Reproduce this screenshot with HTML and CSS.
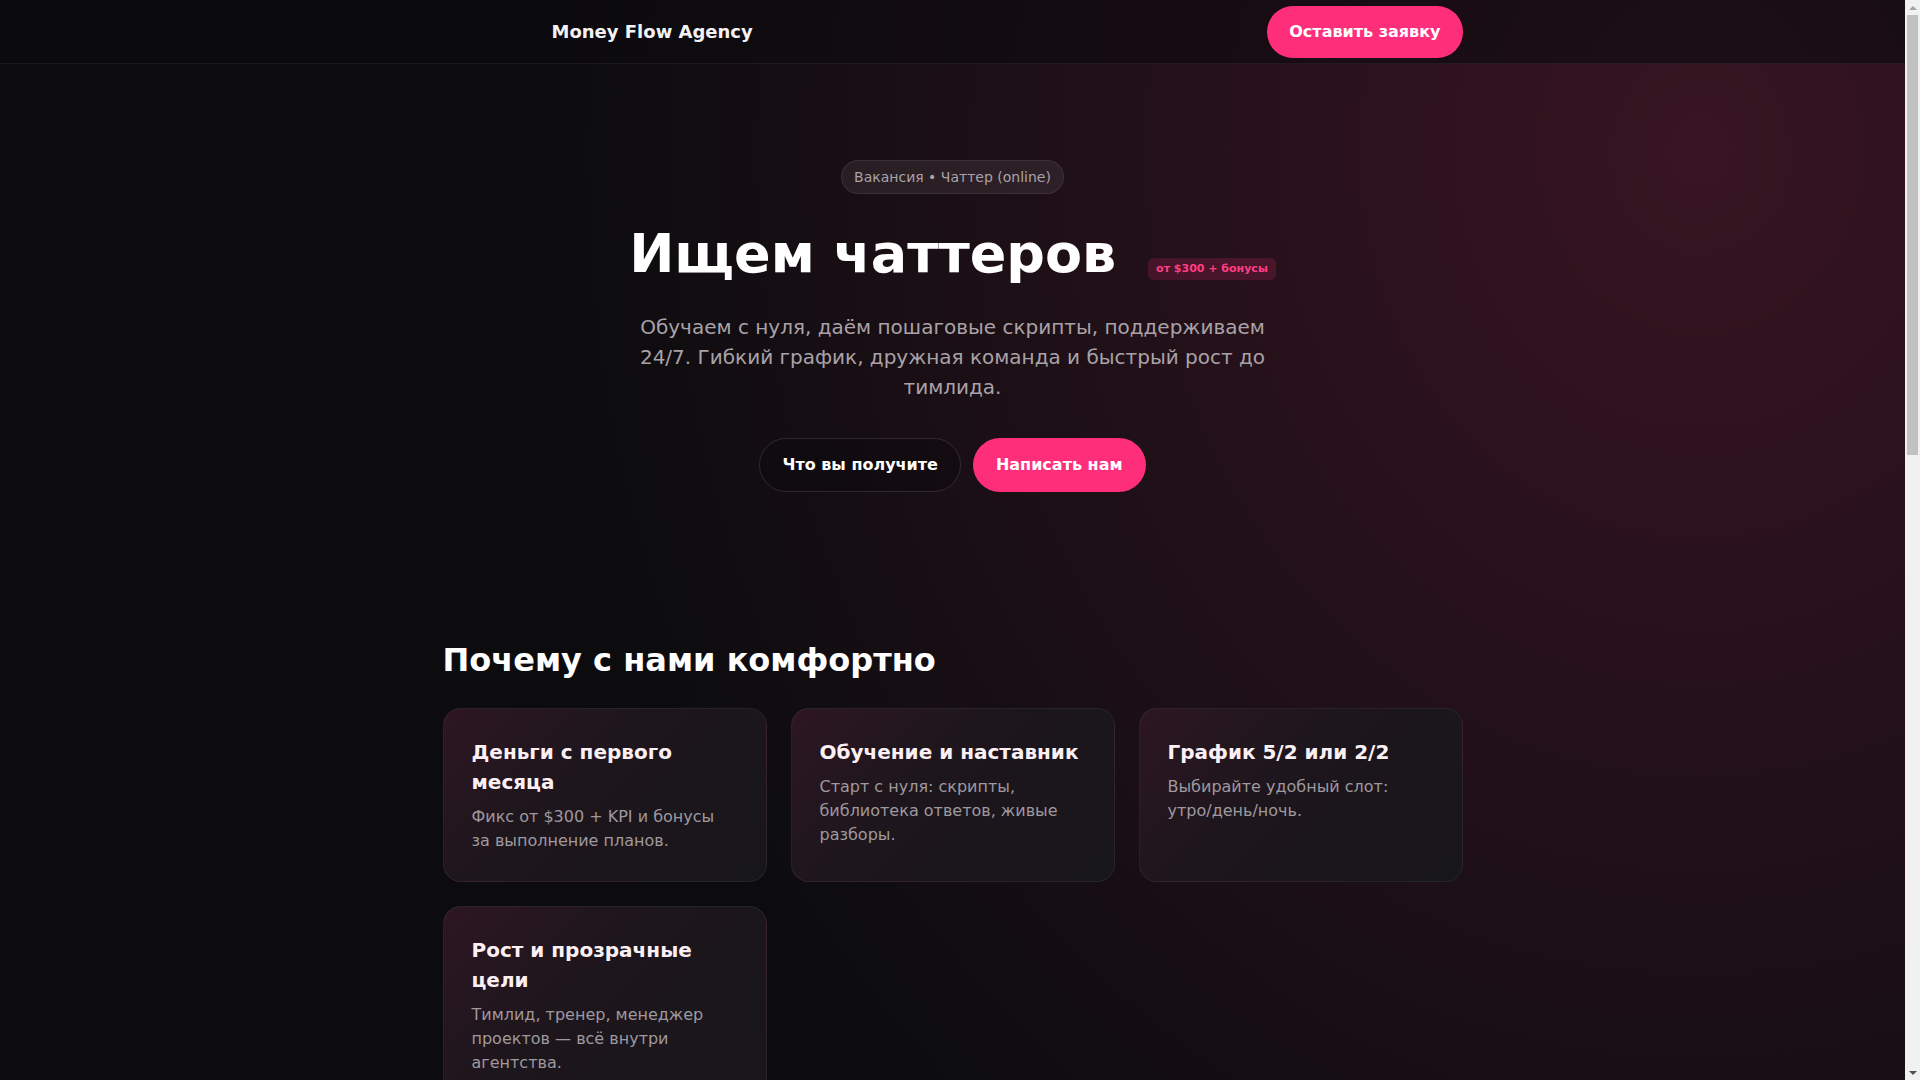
FILE: index.html
```html
<!DOCTYPE html>
<html lang="ru">
<head>
<meta charset="utf-8">
<title>Money Flow Agency — Вакансия чаттер</title>
<link rel="stylesheet" href="styles.css">
</head>
<body>
<div class="page">
<header class="site-header">
  <div class="container header-inner">
    <div class="brand">
      <span class="brand-mark" aria-hidden="true"></span>
      <span class="brand-name">Money Flow Agency</span>
    </div>
    <a class="btn btn-primary btn-header" href="#apply">Оставить заявку</a>
  </div>
</header>

<main>
  <section class="hero container">
    <span class="pill">Вакансия • Чаттер (online)</span>
    <h1 class="hero-title">Ищем чаттеров <span class="salary">от $300 + бонусы</span></h1>
    <p class="hero-sub">Обучаем с нуля, даём пошаговые скрипты, поддерживаем 24/7. Гибкий график, дружная команда и быстрый рост до тимлида.</p>
    <div class="hero-actions">
      <a class="btn btn-ghost" href="#benefits">Что вы получите</a>
      <a class="btn btn-primary" href="#apply">Написать нам</a>
    </div>
  </section>

  <section class="section container" id="benefits">
    <h2 class="section-title">Почему с нами комфортно</h2>
    <div class="cards">
      <article class="card">
        <h3 class="card-title">Деньги с первого месяца</h3>
        <p class="card-text">Фикс от $300 + KPI и бонусы за выполнение планов.</p>
      </article>
      <article class="card">
        <h3 class="card-title">Обучение и наставник</h3>
        <p class="card-text">Старт с нуля: скрипты, библиотека ответов, живые разборы.</p>
      </article>
      <article class="card">
        <h3 class="card-title">График 5/2 или 2/2</h3>
        <p class="card-text">Выбирайте удобный слот: утро/день/ночь.</p>
      </article>
      <article class="card">
        <h3 class="card-title">Рост и прозрачные цели</h3>
        <p class="card-text">Тимлид, тренер, менеджер проектов — всё внутри агентства.</p>
      </article>
    </div>
  </section>

  <section class="section container">
    <h2 class="section-title">Что нужно от вас</h2>
    <div class="cards">
      <article class="card">
        <h3 class="card-title">Грамотная речь</h3>
        <p class="card-text">Уверенный английский на уровне переписки и внимание к деталям.</p>
      </article>
      <article class="card">
        <h3 class="card-title">Компьютер и интернет</h3>
        <p class="card-text">Стабильное соединение и 6–8 часов в выбранную смену.</p>
      </article>
      <article class="card">
        <h3 class="card-title">Желание зарабатывать</h3>
        <p class="card-text">Готовность учиться, пробовать новое и расти вместе с командой.</p>
      </article>
    </div>
  </section>

  <section class="section container">
    <h2 class="section-title">Как начать</h2>
    <div class="cards">
      <article class="card">
        <h3 class="card-title">1. Заявка</h3>
        <p class="card-text">Оставьте контакты — мы ответим в течение дня.</p>
      </article>
      <article class="card">
        <h3 class="card-title">2. Собеседование</h3>
        <p class="card-text">Короткий созвон: расскажем о работе и ответим на вопросы.</p>
      </article>
      <article class="card">
        <h3 class="card-title">3. Обучение</h3>
        <p class="card-text">Неделя практики с наставником и выход на первую смену.</p>
      </article>
    </div>
  </section>

  <section class="section container" id="apply">
    <div class="cta card">
      <h2 class="section-title">Готовы попробовать?</h2>
      <p class="card-text">Напишите нам — расскажем подробности и подберём удобный график.</p>
      <a class="btn btn-primary" href="#apply">Написать нам</a>
    </div>
  </section>
</main>

<footer class="site-footer">
  <div class="container footer-inner">
    <span>© Money Flow Agency</span>
    <span>Работа онлайн • Обучение с нуля</span>
  </div>
</footer>
</div>
<div class="scrollbar" aria-hidden="true">
  <span class="sb-btn sb-up"></span>
  <span class="sb-thumb"></span>
  <span class="sb-fill"></span>
  <span class="sb-btn sb-down"></span>
</div>
</body>
</html>
```

FILE: styles.css
```css
* {
  box-sizing: border-box;
}

html,
body {
  margin: 0;
  padding: 0;
  height: 100%;
}

body {
  display: flex;
  overflow: hidden;
  font-family: "DejaVu Sans", "Noto Sans", sans-serif;
  color: #ffffff;
  background-color: #0c0c0f;
  background-image: radial-gradient(1150px 1300px at 1700px 150px, rgba(255, 60, 120, 0.18), rgba(255, 60, 120, 0) 100%);
  background-repeat: no-repeat;
  -webkit-font-smoothing: antialiased;
}

.page {
  flex: 1 1 auto;
  min-width: 0;
  height: 100vh;
  overflow-y: auto;
  scrollbar-width: none;
}

/* Classic light scrollbar, as in the reference */
.scrollbar {
  flex: 0 0 15px;
  width: 15px;
  height: 100vh;
  display: flex;
  flex-direction: column;
  background: #f1f1f1;
}

.sb-btn {
  flex: 0 0 15px;
  display: flex;
  align-items: center;
  justify-content: center;
  background: #f1f1f1;
}

.sb-btn::before {
  content: "";
  width: 0;
  height: 0;
  border-left: 4px solid transparent;
  border-right: 4px solid transparent;
}

.sb-up::before {
  border-bottom: 4px solid #a3a3a3;
}

.sb-down::before {
  border-top: 4px solid #505050;
}

.sb-thumb {
  flex: 0 0 440px;
  margin: 0 2px;
  background: #c1c1c1;
}

.sb-fill {
  flex: 1 1 auto;
}

a {
  text-decoration: none;
  color: inherit;
}

.container {
  width: 1020px;
  margin-left: auto;
  margin-right: auto;
}

/* Header */
.site-header {
  height: 64px;
  background: rgba(12, 10, 14, 0.6);
  border-bottom: 1px solid rgba(255, 255, 255, 0.06);
}

.header-inner {
  height: 63px;
  display: flex;
  align-items: center;
  justify-content: space-between;
}

.brand {
  display: flex;
  align-items: center;
  gap: 12px;
}

.brand-mark {
  width: 97px;
  height: 40px;
}

.brand-name {
  font-size: 18px;
  font-weight: 700;
  line-height: 28px;
  color: #f4f2f4;
}

/* Buttons */
.btn {
  display: inline-flex;
  align-items: center;
  justify-content: center;
  font-size: 16px;
  font-weight: 700;
  line-height: 24px;
  padding: 14px 22px;
  border-radius: 999px;
  border: 1px solid transparent;
  white-space: nowrap;
}

.btn-primary {
  background: #ff2e7a;
  color: #ffffff;
}

.btn-header {
  padding: 13px 21px;
}

.btn-ghost {
  background: rgba(8, 8, 10, 0.3);
  border-color: rgba(255, 255, 255, 0.12);
  color: #ffffff;
}

/* Hero */
.hero {
  display: flex;
  flex-direction: column;
  align-items: center;
  text-align: center;
  padding-top: 96px;
}

.pill {
  display: inline-block;
  font-size: 14px;
  line-height: 20px;
  padding: 6px 12px;
  border-radius: 999px;
  color: #aaa2a8;
  background: rgba(255, 255, 255, 0.07);
  border: 1px solid rgba(255, 255, 255, 0.08);
}

.hero-title {
  margin: 30px 0 0;
  font-size: 54px;
  line-height: 1.1;
  font-weight: 700;
  color: #ffffff;
}

.salary {
  display: inline-block;
  margin-left: 13px;
  font-size: 11px;
  line-height: 18px;
  font-weight: 700;
  padding: 2px 8px;
  border-radius: 6px;
  color: #ff3d86;
  background: rgba(255, 46, 122, 0.16);
}

.hero-sub {
  margin: 29px 0 0;
  max-width: 660px;
  font-size: 20px;
  line-height: 30px;
  color: #a9a2a8;
}

.hero-actions {
  display: flex;
  gap: 12px;
  margin-top: 36px;
}

/* Sections */
.section {
  padding-top: 148px;
}

.section-title {
  margin: 0 0 28px;
  font-size: 32px;
  line-height: 40px;
  font-weight: 700;
  color: #ffffff;
}

.cards {
  display: grid;
  grid-template-columns: repeat(3, 1fr);
  gap: 24px;
}

.card {
  padding: 28px;
  border-radius: 18px;
  border: 1px solid rgba(255, 255, 255, 0.06);
  background: linear-gradient(135deg, #2d1622 0%, #1d161c 42%, #17161b 100%);
}

.card-title {
  margin: 0 0 8px;
  font-size: 20px;
  line-height: 30px;
  font-weight: 700;
  color: #fcf0f5;
}

.card-text {
  margin: 0;
  font-size: 16px;
  line-height: 24px;
  color: #9f989e;
}

.cta {
  display: flex;
  flex-direction: column;
  align-items: flex-start;
  gap: 20px;
  padding: 40px;
}

.cta .section-title {
  margin: 0;
}

/* Footer */
.site-footer {
  margin-top: 180px;
  border-top: 1px solid rgba(255, 255, 255, 0.06);
  padding: 40px 0 136px;
}

.footer-inner {
  display: flex;
  justify-content: space-between;
  font-size: 14px;
  color: #7d777c;
}
```
